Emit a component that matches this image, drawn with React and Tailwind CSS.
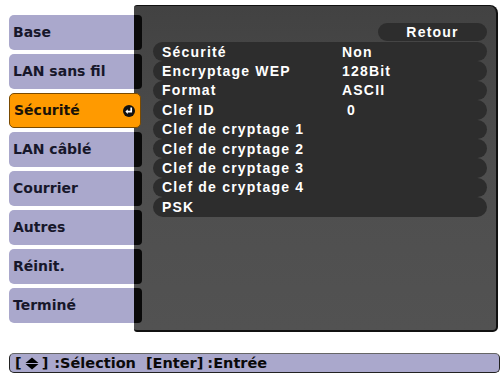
import React from "react";

const tabs = ["Base", "LAN sans fil", "Sécurité", "LAN câblé", "Courrier", "Autres", "Réinit.", "Terminé"];
const rows = [
  ["Sécurité", "Non"],
  ["Encryptage WEP", "128Bit"],
  ["Format", "ASCII"],
  ["Clef ID", "\u00a00"],
  ["Clef de cryptage 1", ""],
  ["Clef de cryptage 2", ""],
  ["Clef de cryptage 3", ""],
  ["Clef de cryptage 4", ""],
  ["PSK", ""],
];

function EnterIcon() {
  return (
    <svg width="12" height="12" viewBox="0 0 12 12">
      <circle cx="6" cy="6" r="6" fill="#111" />
      <path d="M8.2 2.6 V6.6 H4.2" stroke="#fff" strokeWidth="1.7" fill="none" />
      <path d="M2.4 6.6 L4.8 4.3 L4.8 8.9 Z" fill="#fff" />
    </svg>
  );
}

function UpDown() {
  return (
    <svg width="14" height="13" viewBox="0 0 14 13">
      <path d="M7 0.5 L13.5 6 H0.5 Z" fill="#000" />
      <path d="M7 12.5 L13.5 7 H0.5 Z" fill="#000" />
    </svg>
  );
}

export default function App() {
  return (
    <div className="w-[504px] h-[381px] bg-white relative overflow-hidden" style={{ fontFamily: '"DejaVu Sans", sans-serif' }}>
      <div className="flex pt-[5px] pl-[9px]">
        {/* tabs */}
        <div className="flex flex-col gap-[4px] pt-[10px] w-[133px] z-10 relative">
          {tabs.map((t, i) =>
            i === 2 ? (
              <div
                key={t}
                className="h-[35px] w-[132px] rounded-[5px] bg-[#ff9a00] border border-[#7a4a00] flex items-center justify-between pl-[4px] pr-[5px]"
              >
                <span className="text-[14px] font-bold text-[#1a1208]">{t}</span>
                <EnterIcon />
              </div>
            ) : (
              <div key={t} className="h-[35px] flex">
                <div className="w-[125px] h-full bg-[#aaa8cc] rounded-l-[5px] flex items-center pl-[4px]">
                  <span className="text-[14px] font-bold text-[#17172a]">{t}</span>
                </div>
                <div className="w-[8px] h-full bg-[#0a0a0a] rounded-r-[4px]" />
              </div>
            )
          )}
        </div>
        {/* panel */}
        <div className="-ml-[8px] w-[364px] h-[327px] rounded-tr-[8px] rounded-br-[5px] rounded-l-[3px] border-t border-r-2 border-b-2 border-[#111] bg-gradient-to-b from-[#424242] via-[#4e4e4e] to-[#525252] flex flex-col pl-[19px] pr-[9px]">
          <div className="flex justify-end pt-[17px]">
            <div className="w-[109px] h-[18px] rounded-full bg-[#2d2d2d] flex items-center justify-center">
              <span
                className="text-white text-[14px] font-bold tracking-[1.2px] leading-none"
                style={{ fontFamily: '"Liberation Sans", Arial, sans-serif' }}
              >
                Retour
              </span>
            </div>
          </div>
          <div className="mt-[1px] flex flex-col" style={{ fontFamily: '"Liberation Sans", Arial, sans-serif' }}>
            {rows.map(([l, v]) => (
              <div key={l} className="h-[19.4px] rounded-full bg-[#2d2d2d] flex items-center pl-[9px] text-white text-[14px] font-bold tracking-[1.2px] leading-none">
                <span className="w-[180px] whitespace-nowrap">{l}</span>
                <span className="whitespace-pre">{v}</span>
              </div>
            ))}
          </div>
        </div>
      </div>
      {/* footer */}
      <div className="absolute left-[9px] top-[353px] w-[491px] h-[20px] bg-[#aaa8cc] border border-[#222] border-t-[#666] rounded-[5px] flex items-center pl-[5px] text-[14.5px] font-bold text-[#0a0a0a] leading-none whitespace-pre">
        <span>[</span>
        <span className="mx-[3px]"><UpDown /></span>
        <span>]</span>
        <span className="ml-[6px]">:Sélection</span>
        <span className="ml-[10px]">[Enter]</span>
        <span className="ml-[4px]">:Entrée</span>
      </div>
    </div>
  );
}
